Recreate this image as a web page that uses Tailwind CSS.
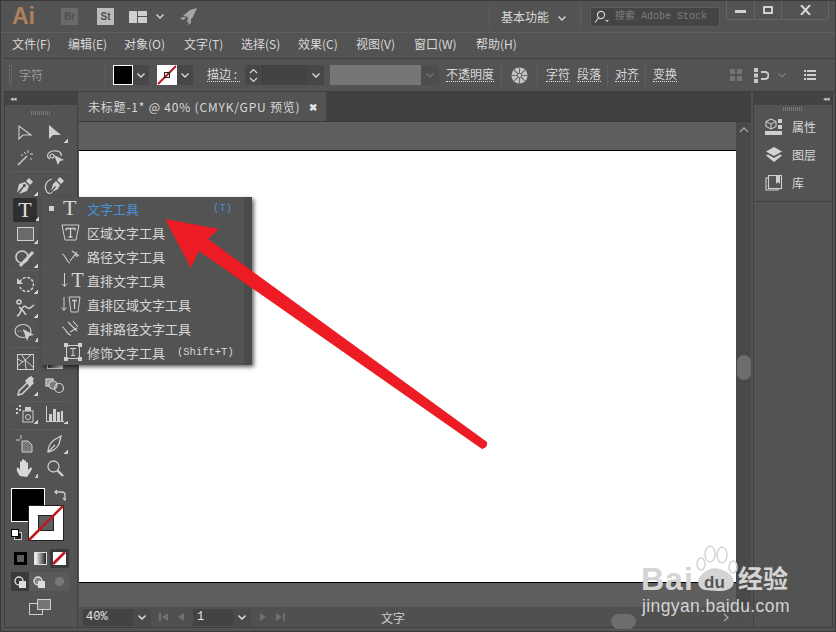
<!DOCTYPE html>
<html lang="en">
<head>
<meta charset="UTF-8">
<title>Adobe Illustrator</title>
<script src="https://cdn.jsdelivr.net/npm/@tailwindcss/browser@4"></script>
</head>
<body class="bg-[#535353]">
<div class="relative w-[836px] h-[632px] overflow-hidden flex flex-col bg-[#535353] border border-[#3a3a3a] text-[#d8d8d8] font-['Noto_Sans_CJK_SC','Liberation_Sans',sans-serif]">

  <!-- title bar -->
  <div class="h-[32px] shrink-0 flex items-center border-b border-[#5f5f5f] relative">
    <span class="ml-[11px] w-[24px] text-[23px] leading-none font-bold text-[#b07f5c] font-['Liberation_Sans',sans-serif]">Ai</span>
    <span class="ml-[25px] w-[17px] h-[17px] bg-[#6a6a6a] text-[#4f4f4f] text-[10px] font-bold flex items-center justify-center font-['Liberation_Sans',sans-serif]">Br</span>
    <span class="ml-[19px] w-[17px] h-[17px] bg-[#bcbcbc] text-[#4f4f4f] text-[10px] font-bold flex items-center justify-center font-['Liberation_Sans',sans-serif]">St</span>
    <svg class="ml-[15px]" width="18" height="12" viewBox="0 0 18 12" fill="#cfcfcf"><rect width="8" height="12"/><rect x="9" width="9" height="5"/><rect x="9" y="6" width="9" height="6"/></svg>
    <svg class="ml-[9px]" width="8" height="5" viewBox="0 0 8 5" fill="none" stroke="#d8d8d8" stroke-width="1.4"><path d="M.5.5 4 4 7.5.5"/></svg>
    <svg class="ml-[15px]" width="19" height="18" viewBox="0 0 19 18" fill="#a6a6a6"><path d="M18 0 11 2 4 8l5 1-1 6 6-6 4-9Z"/><path d="M1 10l4-1 2 1-3 2-3-2ZM9 17l1-4 2-2v4l-3 2Z"/></svg>
    <div class="ml-[291px] w-px h-[24px] bg-[#5f5f5f]"></div>
    <span class="ml-[11px] w-[48px] text-[12px] leading-none whitespace-nowrap">基本功能</span>
    <svg class="ml-[9px] mt-[3px]" width="8" height="5" viewBox="0 0 8 5" fill="none" stroke="#d8d8d8" stroke-width="1.4"><path d="M.5.5 4 4 7.5.5"/></svg>
    <div class="ml-[14px] w-px h-[24px] bg-[#5f5f5f]"></div>
    <div class="ml-[9px] w-[130px] h-[20px] bg-[#444444] border border-[#5c5c5c] rounded-[2px] flex items-center px-[3px]">
      <svg width="16" height="14" viewBox="0 0 16 14" fill="none" stroke="#cfcfcf" stroke-width="1.2"><circle cx="7" cy="5" r="3.6"/><path d="M4.5 8 1 12.5"/><path d="M11 10h4l-2 2Z" fill="#cfcfcf" stroke="none"/></svg>
      <span class="ml-[5px] text-[10px] leading-none text-[#7e7e7e] whitespace-nowrap font-['Liberation_Mono','Noto_Sans_CJK_SC',monospace]">搜索 Adobe Stock</span>
    </div>
    <div class="absolute left-[725px] top-[-1px] w-[103px] h-[20px] border border-[#656565] rounded-b-[3px] flex">
      <span class="w-[28px] flex items-center justify-center border-r border-[#656565]"><span class="w-[11px] h-[3px] bg-[#d0d0d0] mt-[3px]"></span></span>
      <span class="w-[27px] flex items-center justify-center border-r border-[#656565]"><span class="w-[10px] h-[8px] border-2 border-[#d0d0d0]"></span></span>
      <span class="flex-1 flex items-center justify-center"><svg width="11" height="10" viewBox="0 0 11 10" stroke="#d8d8d8" stroke-width="2"><path d="M1 0l9 10M10 0 1 10"/></svg></span>
    </div>
  </div>

  <!-- menu bar -->
  <div class="h-[25px] shrink-0 flex items-center pb-[3px] text-[12px] leading-none font-['Noto_Sans_CJK_SC',sans-serif]">
    <span class="ml-[11px] w-[56px]">文件(F)</span>
    <span class="w-[56px]">编辑(E)</span>
    <span class="w-[60px]">对象(O)</span>
    <span class="w-[57px]">文字(T)</span>
    <span class="w-[57px]">选择(S)</span>
    <span class="w-[58px]">效果(C)</span>
    <span class="w-[58px]">视图(V)</span>
    <span class="w-[62px]">窗口(W)</span>
    <span>帮助(H)</span>
  </div>

  <!-- control bar -->
  <div class="h-[34px] shrink-0 flex items-center border-y border-[#404040] bg-[#535353] ml-[3px] text-[12px] leading-none">
    <span class="ml-[5px] w-[3px] h-[20px] border-x border-dotted border-[#737373]"></span>
    <span class="ml-[7px] w-[86px] text-[#9a9a9a]">字符</span>
    <span class="w-px h-[24px] bg-[#5f5f5f]"></span>
    <span class="ml-[7px] w-[20px] h-[20px] bg-black border border-white"></span>
    <span class="w-[16px] h-[20px] bg-[#474747] flex items-center justify-center"><svg width="8" height="5" viewBox="0 0 8 5" fill="none" stroke="#d8d8d8" stroke-width="1.4"><path d="M.5.5 4 4 7.5.5"/></svg></span>
    <svg class="ml-[8px]" width="20" height="20" viewBox="0 0 20 20"><rect width="20" height="20" fill="#fff"/><path d="M1 19 19 1" stroke="#c0181f" stroke-width="2"/><rect x="7.5" y="7.5" width="5" height="5" fill="none" stroke="#222"/></svg>
    <span class="w-[16px] h-[20px] bg-[#474747] flex items-center justify-center"><svg width="8" height="5" viewBox="0 0 8 5" fill="none" stroke="#d8d8d8" stroke-width="1.4"><path d="M.5.5 4 4 7.5.5"/></svg></span>
    <span class="ml-[14px] w-[33px] border-b border-dotted border-[#d8d8d8] pb-[1px] whitespace-nowrap">描边 :</span>
    <span class="ml-[5px] w-[18px] h-[20px] bg-[#474747] border-r border-[#3c3c3c] flex items-center justify-center"><svg width="9" height="15" viewBox="0 0 9 15" fill="none" stroke="#d8d8d8" stroke-width="1.2"><path d="M1 5l3.5-3.5L8 5M1 10l3.5 3.5L8 10"/></svg></span>
    <span class="w-[44px] h-[20px] bg-[#434343]"></span>
    <span class="w-[17px] h-[20px] bg-[#474747] flex items-center justify-center"><svg width="8" height="5" viewBox="0 0 8 5" fill="none" stroke="#d8d8d8" stroke-width="1.4"><path d="M.5.5 4 4 7.5.5"/></svg></span>
    <span class="ml-[6px] w-[91px] h-[20px] bg-[#767676]"></span>
    <span class="w-[18px] h-[20px] bg-[#4d4d4d] flex items-center justify-center"><svg width="8" height="5" viewBox="0 0 8 5" fill="none" stroke="#6e6e6e" stroke-width="1.4"><path d="M.5.5 4 4 7.5.5"/></svg></span>
    <span class="ml-[7px] w-[48px] border-b border-dotted border-[#d8d8d8] pb-[1px] whitespace-nowrap">不透明度</span>
    <span class="ml-[7px] w-px h-[24px] bg-[#5f5f5f]"></span>
    <svg class="ml-[9px]" width="17" height="17" viewBox="0 0 17 17"><circle cx="8.5" cy="8.5" r="8" fill="#c4c4c4"/><g stroke="#666" stroke-width="1.1"><path d="M8.5 1v15M1 8.5h15M3.2 3.2l10.6 10.6M13.8 3.2 3.2 13.8"/></g><circle cx="8.5" cy="8.5" r="2.2" fill="#c4c4c4" stroke="#666"/></svg>
    <span class="ml-[9px] w-px h-[24px] bg-[#5f5f5f]"></span>
    <span class="ml-[8px] w-[24px] border-b border-dotted border-[#d8d8d8] pb-[1px] whitespace-nowrap">字符</span>
    <span class="ml-[7px] w-[24px] border-b border-dotted border-[#d8d8d8] pb-[1px] whitespace-nowrap">段落</span>
    <span class="ml-[6px] w-px h-[24px] bg-[#5f5f5f]"></span>
    <span class="ml-[7px] w-[24px] border-b border-dotted border-[#d8d8d8] pb-[1px] whitespace-nowrap">对齐</span>
    <span class="ml-[6px] w-px h-[24px] bg-[#5f5f5f]"></span>
    <span class="ml-[7px] w-[24px] border-b border-dotted border-[#d8d8d8] pb-[1px] whitespace-nowrap">变换</span>
    <svg class="ml-[53px]" width="12" height="12" viewBox="0 0 12 12" fill="#747474"><rect width="5" height="5"/><rect x="7" width="5" height="5"/><rect y="7" width="5" height="5"/><rect x="7" y="7" width="5" height="5"/></svg>
    <svg class="ml-[12px]" width="15" height="15" viewBox="0 0 15 15"><path d="M0 0h4v4H0zM0 11h4v4H0z" fill="#c9c9c9"/><path d="M0 5.500h4v4H0z" fill="#c9c9c9"/><path d="M7 4h4a3.500 3.500 0 0 1 0 7H7" fill="none" stroke="#c9c9c9" stroke-width="2"/></svg>
    <svg class="ml-[9px]" width="8" height="5" viewBox="0 0 8 5" fill="none" stroke="#7c7c7c" stroke-width="1.2"><path d="M.5.5 4 4 7.500.5"/></svg>
    <svg class="ml-[18px]" width="12" height="10" viewBox="0 0 12 10" fill="#cfcfcf"><path d="M0 0h2v2H0zM3 0h9v2H3zM0 4h2v2H0zM3 4h9v2H3zM0 8h2v2H0zM3 8h9v2H3z"/></svg>
  </div>

  <!-- work area -->
  <div class="flex-1 flex min-h-0 ml-[3px] mr-[2px] mb-[3px] border-b border-[#3f3f3f]">

    <!-- tools panel -->
    <div class="w-[74px] shrink-0 flex flex-col border-x border-[#404040] mr-px">
      <div class="h-[13px] bg-[#434343] flex items-center pl-[5px] text-[7px] leading-none text-[#c8c8c8] tracking-[-1px]">◂◂</div>
      <div class="h-[15px] flex items-center justify-center"><span class="w-[20px] h-[4px] bg-[repeating-linear-gradient(90deg,#777_0,#777_1px,transparent_1px,transparent_2px)]"></span></div>
      <div class="flex flex-col items-start pl-[5px]">
        <div class="grid grid-cols-2 auto-rows-[25px] w-[60px] h-[52px] border-b border-[#5d5d5d] place-items-center">
          <svg width="16" height="17" viewBox="0 0 16 17" fill="none" stroke="#cfcfcf" stroke-width="1.1"><path d="M2 2v13l4-4 8 0Z"/></svg>
          <div class="relative w-full h-full flex items-center justify-center">
            <svg width="16" height="17" viewBox="0 0 16 17" fill="#cfcfcf"><path d="M2 1v14l4-4h8Z"/></svg>
            <i class="absolute right-[2px] bottom-[2px] w-[4px] h-[4px] bg-[linear-gradient(135deg,transparent_50%,#cfcfcf_50%)]"></i>
          </div>
          <svg width="18" height="18" viewBox="0 0 18 18" stroke="#cfcfcf" fill="none" stroke-width="1.5"><path d="M2 16 11 7"/><path d="M12 1v3M14 5h3M8 3l2 2M15 9v2M5 6h2" stroke-width="1"/></svg>
          <svg width="20" height="18" viewBox="0 0 20 18" fill="none" stroke="#cfcfcf" stroke-width="1.2"><path d="M5 10C1 8 2 3 8 2c6-1 9 2 8 5"/><circle cx="7" cy="7" r="2"/><path d="M9 6l10 5-4 1-2 4Z" fill="#cfcfcf" stroke="none"/></svg>
        </div>
        <div class="grid grid-cols-2 auto-rows-[24px] w-[60px] h-[99px] border-b border-[#5d5d5d] place-items-center pt-[2px]">
          <div class="relative w-full h-full flex items-center justify-center">
            <svg width="18" height="18" viewBox="0 0 18 18" fill="#cfcfcf"><path d="M13 1l4 4-3 3-4-4ZM9 5l4 4-2 5-8 3 5-7a1.500 1.500 0 1 0-1-1L1 16l2-9Z"/></svg>
            <i class="absolute right-[2px] bottom-[2px] w-[4px] h-[4px] bg-[linear-gradient(135deg,transparent_50%,#cfcfcf_50%)]"></i>
          </div>
          <svg width="22" height="20" viewBox="0 0 22 20"><path d="M16 1l4 4-3 3-4-4ZM12 5l4 4-2 4-6 3 4-5-1-1-4 5 2-7Z" fill="#cfcfcf"/><path d="M8 3C1 5 0 12 3 16c2 2 4 2 5 0" fill="none" stroke="#cfcfcf" stroke-width="1.2"/></svg>
          <span class="relative w-[24px] h-[24px] bg-[#2f2f2f] rounded-[2px] flex items-center justify-center text-[22px] leading-none text-[#e0e0e0] font-['Liberation_Serif',serif]">T<i class="absolute right-[-2px] bottom-[1px] w-[4px] h-[4px] bg-[linear-gradient(135deg,transparent_50%,#cfcfcf_50%)]"></i></span>
          <span></span>
          <div class="relative w-full h-full flex items-center justify-center">
            <span class="w-[17px] h-[14px] bg-[#6a6a6a] border border-[#cfcfcf]"></span>
            <i class="absolute right-[2px] bottom-[2px] w-[4px] h-[4px] bg-[linear-gradient(135deg,transparent_50%,#cfcfcf_50%)]"></i>
          </div>
          <span></span>
          <div class="relative w-full h-full flex items-center justify-center">
            <svg width="22" height="20" viewBox="0 0 22 20" fill="none" stroke="#cfcfcf" stroke-width="1.6"><circle cx="8" cy="9" r="6"/><path d="M6 18 19 4" stroke-width="3"/></svg>
            <i class="absolute right-[2px] bottom-[2px] w-[4px] h-[4px] bg-[linear-gradient(135deg,transparent_50%,#cfcfcf_50%)]"></i>
          </div>
          <span></span>
        </div>
        <div class="grid grid-cols-2 auto-rows-[24px] w-[60px] h-[77px] border-b border-[#5d5d5d] place-items-center pt-[1px]">
          <div class="relative w-full h-full flex items-center justify-center">
            <svg width="18" height="18" viewBox="0 0 18 18" fill="none" stroke="#cfcfcf" stroke-width="1.6"><path d="M4 7a7 7 0 1 1 0 5" stroke-dasharray="3 1.500"/><path d="M1 3v6h6Z" fill="#cfcfcf" stroke="none"/></svg>
            <i class="absolute right-[2px] bottom-[2px] w-[4px] h-[4px] bg-[linear-gradient(135deg,transparent_50%,#cfcfcf_50%)]"></i>
          </div>
          <span></span>
          <div class="relative w-full h-full flex items-center justify-center">
            <svg width="20" height="18" viewBox="0 0 20 18" fill="none" stroke="#cfcfcf" stroke-width="1.600"><circle cx="4" cy="3" r="2"/><path d="M2 17c4-1 3-6 6-9s4 3 7 1 3-2 4-3M4 8c2 2 5 4 7 8"/></svg>
            <i class="absolute right-[2px] bottom-[2px] w-[4px] h-[4px] bg-[linear-gradient(135deg,transparent_50%,#cfcfcf_50%)]"></i>
          </div>
          <span></span>
          <div class="relative w-full h-full flex items-center justify-center">
            <svg width="22" height="19" viewBox="0 0 22 19"><ellipse cx="9" cy="8" rx="8" ry="6.500" fill="none" stroke="#cfcfcf" stroke-width="1.200"/><path d="M9 6l11 6-5 1-2 5Z" fill="#cfcfcf"/><path d="M4 8h6" stroke="#cfcfcf" stroke-dasharray="1 1.500"/></svg>
            <i class="absolute right-[2px] bottom-[2px] w-[4px] h-[4px] bg-[linear-gradient(135deg,transparent_50%,#cfcfcf_50%)]"></i>
          </div>
          <span></span>
        </div>
        <div class="grid grid-cols-2 auto-rows-[24px] w-[60px] h-[54px] border-b border-[#5d5d5d] place-items-center pt-[2px]">
          <svg width="17" height="16" viewBox="0 0 17 16" fill="none" stroke="#cfcfcf"><rect x=".5" y=".5" width="16" height="15"/><path d="M.5 12 8 6l8 7M5 1l3 5 1 9M14 1 8 6M1 5l5 3"/></svg>
          <span class="w-[16px] h-[14px] bg-[linear-gradient(90deg,#3b3b3b,#dddddd)] border border-[#cfcfcf]"></span>
          <div class="relative w-full h-full flex items-center justify-center">
            <svg width="18" height="20" viewBox="0 0 18 20" fill="none" stroke="#cfcfcf" stroke-width="1.500"><path d="M11 7 3 15l-1 4 4-1 8-8"/><path d="M10 5l4 5 3-3-1-2 1-2-2-2-2 1-1 1Z" fill="#cfcfcf"/></svg>
            <i class="absolute right-[2px] bottom-[2px] w-[4px] h-[4px] bg-[linear-gradient(135deg,transparent_50%,#cfcfcf_50%)]"></i>
          </div>
          <svg width="20" height="16" viewBox="0 0 20 16" fill="none" stroke="#cfcfcf" stroke-width="1.200"><rect x="1" y="1" width="7" height="7" fill="#9a9a9a"/><circle cx="8" cy="7" r="4" fill="#7a7a7a"/><circle cx="14" cy="10" r="4.500"/></svg>
        </div>
        <div class="grid grid-cols-2 auto-rows-[24px] w-[60px] h-[28px] border-b border-[#5d5d5d] place-items-center">
          <div class="relative w-full h-full flex items-center justify-center">
            <svg width="18" height="18" viewBox="0 0 18 18"><path d="M0 3h2v2H0zM3 0h2v2H3zM3 4h2v2H3zM0 7h2v2H0z" fill="#cfcfcf"/><rect x="7" y="6" width="10" height="11" fill="none" stroke="#cfcfcf"/><rect x="9" y="2" width="6" height="4" fill="#cfcfcf"/><circle cx="12" cy="12" r="2.500" fill="none" stroke="#cfcfcf"/></svg>
            <i class="absolute right-[2px] bottom-[2px] w-[4px] h-[4px] bg-[linear-gradient(135deg,transparent_50%,#cfcfcf_50%)]"></i>
          </div>
          <div class="relative w-full h-full flex items-center justify-center">
            <svg width="18" height="16" viewBox="0 0 18 16" fill="#cfcfcf"><path d="M0 0h1v15h17v1H0z"/><path d="M3 8h3v7H3zM7 3h3v12H7zM11 6h3v9h-3zM15 5h2v10h-2z"/></svg>
            <i class="absolute right-[2px] bottom-[2px] w-[4px] h-[4px] bg-[linear-gradient(135deg,transparent_50%,#cfcfcf_50%)]"></i>
          </div>
        </div>
        <div class="grid grid-cols-2 auto-rows-[24px] w-[60px] h-[52px] place-items-center pt-[2px]">
          <svg width="18" height="18" viewBox="0 0 18 18"><path d="M6 6h6l4 4v7H6z" fill="#777" stroke="#cfcfcf"/><path d="M5 0v4M0 5h4" stroke="#cfcfcf"/></svg>
          <div class="relative w-full h-full flex items-center justify-center">
            <svg width="18" height="20" viewBox="0 0 18 20" fill="none" stroke="#cfcfcf" stroke-width="1.300"><path d="M2 18c0-5 2-9 6-12l7-4-2 8c-2 4-6 7-11 8Z"/><path d="M2 18 9 11"/></svg>
            <i class="absolute right-[2px] bottom-[2px] w-[4px] h-[4px] bg-[linear-gradient(135deg,transparent_50%,#cfcfcf_50%)]"></i>
          </div>
          <div class="relative w-full h-full flex items-center justify-center">
            <svg width="18" height="18" viewBox="0 0 18 18" fill="#d8d8d8"><path d="M4 17C2 14 0 11 1 9c1-1 2 0 3 2V3c0-1 2-1 2 0v5-7c0-1 2-1 2 0v7-6c0-1 2-1 2 0v7-5c0-1 2-1 2 0v7l2-2c1-1 2 0 2 1l-3 5-2 3Z"/></svg>
            <i class="absolute right-[2px] bottom-[2px] w-[4px] h-[4px] bg-[linear-gradient(135deg,transparent_50%,#cfcfcf_50%)]"></i>
          </div>
          <svg width="18" height="18" viewBox="0 0 18 18" fill="none" stroke="#cfcfcf" stroke-width="1.300"><circle cx="7.500" cy="7.500" r="5.500"/><path d="M11.500 11.500 17 17" stroke-width="2.400"/></svg>
        </div>
        <!-- fill and stroke -->
        <div class="relative w-[60px] h-[67px] shrink-0">
          <span class="absolute left-[1px] top-[6px] w-[34px] h-[34px] bg-black border border-white"></span>
          <span class="absolute left-[18px] top-[23px] w-[36px] h-[36px] bg-white border border-[#222] flex items-center justify-center"><span class="w-[16px] h-[16px] bg-[#5f5f5f] border border-[#222]"></span></span>
          <svg class="absolute left-[18px] top-[23px]" width="36" height="36" viewBox="0 0 36 36"><path d="M1 35 35 1" stroke="#c0181f" stroke-width="2.500"/></svg>
          <svg class="absolute left-[44px] top-[7px]" width="12" height="12" viewBox="0 0 12 12" fill="none" stroke="#cfcfcf" stroke-width="1.300"><path d="M1 3h7c2 0 3 1 3 3v5"/><path d="M3 1 1 3l2 2M9 9l2 2 2-2"/></svg>
          <span class="absolute left-[1px] top-[47px] w-[8px] h-[8px] bg-white border border-black z-10"></span>
          <span class="absolute left-[4px] top-[50px] w-[8px] h-[8px] bg-[#222] border border-[#cfcfcf]"></span>
        </div>
        <div class="flex w-[58px] h-[19px] ml-[1px] items-center">
          <span class="w-[19px] flex justify-center"><span class="w-[13px] h-[13px] bg-[#5f5f5f] border-[3px] border-black"></span></span>
          <span class="w-[20px] flex justify-center"><span class="w-[13px] h-[13px] bg-[linear-gradient(90deg,#fff,#222)] border border-[#ddd]"></span></span>
          <span class="w-[19px] h-[19px] bg-[#3a3a3a] rounded-[2px] flex items-center justify-center"><svg width="13" height="13" viewBox="0 0 14 14"><rect width="14" height="14" fill="#fff"/><path d="M0 13 13 0" stroke="#c0181f" stroke-width="3"/></svg></span>
        </div>
        <div class="flex w-[58px] h-[19px] mt-[4px] ml-[1px] bg-[#5a5a5a] items-center">
          <span class="w-[18px] h-[19px] bg-[#3a3a3a] flex items-center justify-center"><svg width="12" height="12" viewBox="0 0 12 12"><circle cx="5" cy="5" r="4" fill="none" stroke="#ddd" stroke-width="1.400"/><rect x="5" y="5" width="7" height="7" fill="#ddd"/></svg></span>
          <span class="w-[20px] flex justify-center"><svg width="12" height="12" viewBox="0 0 12 12"><circle cx="5" cy="5" r="4" fill="#888" stroke="#ddd" stroke-width="1.400"/><rect x="5" y="5" width="7" height="7" fill="#ddd"/></svg></span>
          <span class="w-[20px] flex justify-center"><span class="w-[9px] h-[9px] rounded-full bg-[#777]"></span></span>
        </div>
        <svg class="mt-[8px] ml-[19px]" width="22" height="16" viewBox="0 0 22 16" fill="none" stroke="#cfcfcf"><rect x=".5" y="4.500" width="13" height="11"/><rect x="8.500" y=".5" width="13" height="10" fill="#767676"/></svg>
      </div>
    </div>

    <!-- document -->
    <div class="flex-1 flex flex-col min-w-0">
      <div class="h-[30px] shrink-0 flex bg-[#414141] border-b border-[#3a3a3a]">
        <div class="w-[247px] bg-[#535353] flex items-center pl-[9px] pr-[8px] justify-between text-[12px] tracking-[0.8px] leading-none whitespace-nowrap">
          <span>未标题-1* @ 40% (CMYK/GPU 预览)</span>
          <span class="text-[10px] font-bold text-[#e4e4e4]">✖</span>
        </div>
      </div>
      <div class="flex-1 flex min-h-0">
        <div class="flex-1 flex flex-col bg-[#5e5e5e]">
          <div class="h-[28px] shrink-0"></div>
          <div class="h-[433px] shrink-0 bg-white border-y border-black"></div>
        </div>
        <div class="w-[15px] shrink-0 bg-[#494949] flex flex-col items-center pt-[5px] relative">
          <svg width="10" height="6" viewBox="0 0 10 6" fill="none" stroke="#9c9c9c" stroke-width="1.500"><path d="M1 5l4-4 4 4"/></svg>
          <span class="absolute left-[1px] top-[233px] w-[14px] h-[25px] rounded-full bg-[#6d6d6d]"></span>
        </div>
      </div>
      <!-- status bar -->
      <div class="h-[20px] shrink-0 flex items-center bg-[#505050] text-[12px] leading-none pr-[15px]">
        <span class="ml-[4px] w-[50px] h-[17px] bg-[#434343] flex items-center pl-[3px] text-[#e4e4e4] font-['Liberation_Mono',monospace]">40%</span>
        <span class="w-[18px] h-[17px] bg-[#4a4a4a] flex items-center justify-center"><svg width="8" height="5" viewBox="0 0 8 5" fill="none" stroke="#e4e4e4" stroke-width="1.400"><path d="M.5.5 4 4 7.500.5"/></svg></span>
        <svg class="ml-[8px]" width="25" height="10" viewBox="0 0 25 10" fill="#707070"><path d="M0 1h2v8H0zM9 1v8L3 5zM25 1v8l-6-4z"/></svg>
        <span class="ml-[9px] w-[40px] h-[17px] bg-[#434343] flex items-center pl-[4px] text-[#e4e4e4] font-['Liberation_Mono',monospace]">1</span>
        <span class="w-[18px] h-[17px] bg-[#4a4a4a] flex items-center justify-center"><svg width="8" height="5" viewBox="0 0 8 5" fill="none" stroke="#e4e4e4" stroke-width="1.400"><path d="M.5.5 4 4 7.500.5"/></svg></span>
        <svg class="ml-[9px]" width="26" height="10" viewBox="0 0 26 10" fill="#707070"><path d="M0 1v8l6-4zM16 1v8l6-4zM23 1h2v8h-2z"/></svg>
        <span class="ml-[95px] text-[#cfcfcf] mt-[2px]">文字</span>
        <svg class="ml-auto mr-[7px]" width="6" height="9" viewBox="0 0 6 9" fill="none" stroke="#b0b0b0" stroke-width="1.200"><path d="M1 1l4 3.500L1 8"/></svg>
        <span class="absolute left-[610px] top-[613px] w-[25px] h-[15px] rounded-full bg-[#6d6d6d]"></span>
      </div>
    </div>

    <!-- right panel -->
    <div class="w-[80px] shrink-0 flex flex-col ml-[2px] border-x border-[#404040]">
      <div class="h-[13px] bg-[#434343] flex items-center justify-end pr-[3px] text-[7px] leading-none text-[#c8c8c8] tracking-[-1px]">◂◂</div>
      <div class="h-[8px] flex items-center justify-center"><span class="w-[20px] h-[4px] bg-[repeating-linear-gradient(90deg,#777_0,#777_1px,transparent_1px,transparent_2px)]"></span></div>
      <div class="flex flex-col border-b border-[#404040] pb-[4px] text-[12px] leading-none">
        <div class="h-[28px] flex items-center pl-[11px] gap-[9px]">
          <svg width="18" height="18" viewBox="0 0 18 18"><path d="M6 1l5 2.500v5L6 11 1 8.500v-5Z" fill="none" stroke="#cfcfcf" stroke-width="1.100"/><path d="M1 3.500 6 6l5-2.500M6 6v5" fill="none" stroke="#cfcfcf"/><rect x="13" y="1" width="4" height="4" fill="#cfcfcf"/><rect x="13" y="7" width="4" height="4" fill="#cfcfcf"/><rect y="13" width="17" height="4" fill="#cfcfcf"/></svg>
          <span>属性</span>
        </div>
        <div class="h-[28px] flex items-center pl-[11px] gap-[9px]">
          <svg width="18" height="16" viewBox="0 0 18 16" fill="#d4d4d4"><path d="M9 0l8 4.500L9 9 1 4.500Z"/><path d="M1 8.500 3 7.500 9 11l6-3.500 2 1L9 15Z"/></svg>
          <span>图层</span>
        </div>
        <div class="h-[28px] flex items-center pl-[11px] gap-[9px]">
          <svg width="18" height="16" viewBox="0 0 18 16" fill="none" stroke="#cfcfcf" stroke-width="1.100"><path d="M3 3H1v12h12v-1"/><rect x="3.500" y=".5" width="13" height="13"/><path d="M11 1h4v8l-2-2-2 2Z" fill="#cfcfcf" stroke="none"/></svg>
          <span>库</span>
        </div>
      </div>
    </div>
  </div>

  <!-- type tool flyout -->
  <div class="absolute left-[40px] top-[196px] w-[211px] h-[168px] bg-[#535353] shadow-[2px_2px_4px_rgba(0,0,0,0.6)] flex text-[13px] leading-none text-[#d8d8d8] font-['Noto_Sans_CJK_SC',sans-serif]">
    <div class="w-[202px] flex flex-col -mt-[1px]">
      <div class="h-[24px] flex items-center relative"><span class="absolute left-[8px] w-[5px] h-[5px] bg-[#cfcfcf]"></span><span class="w-[46px] pl-[22px] text-[22px] font-['Liberation_Serif',serif] text-[#d8d8d8]">T</span><span class="text-[#4a90d9]">文字工具</span><span class="ml-auto mr-[11px] text-[#4a90d9] text-[10.500px] font-['Liberation_Mono',monospace]">(T)</span></div>
      <div class="h-[24px] flex items-center"><svg class="ml-[20px] mr-[7px]" width="19" height="17" viewBox="0 0 19 17" fill="none" stroke="#cfcfcf"><path d="M1 1h17l-3 15H4Z"/><path d="M5 4.500h9v2M9.500 4.500V13M7.500 13h4M5 6.500v-2" stroke-width="1.300"/></svg>区域文字工具</div>
      <div class="h-[24px] flex items-center"><svg class="ml-[20px] mr-[7px]" width="19" height="17" viewBox="0 0 19 17" fill="none" stroke="#cfcfcf" stroke-width="1.100"><path d="M1 6c3 0 5 9 8 9"/><path d="M9 13 16 4M11 3l7 5M14 6l2 3"/></svg>路径文字工具</div>
      <div class="h-[24px] flex items-center"><svg class="ml-[20px]" width="7" height="15" viewBox="0 0 7 15" fill="none" stroke="#cfcfcf"><path d="M3.500 0v13M1 10.500l2.500 3 2.500-3"/></svg><span class="w-[19px] text-[20px] font-['Liberation_Serif',serif] text-center">T</span>直排文字工具</div>
      <div class="h-[24px] flex items-center"><svg class="ml-[20px] mr-[1px]" width="6" height="15" viewBox="0 0 6 15" fill="none" stroke="#cfcfcf"><path d="M3 0v13M.5 10.500l2.500 3 2.500-3"/></svg><svg class="mr-[6px]" width="13" height="17" viewBox="0 0 13 17" fill="none" stroke="#cfcfcf"><path d="M1 1h11l-2 15H3Z"/><path d="M4 4.500h5M6.500 4.500V13" stroke-width="1.300"/></svg>直排区域文字工具</div>
      <div class="h-[24px] flex items-center"><svg class="ml-[20px] mr-[7px]" width="19" height="17" viewBox="0 0 19 17" fill="none" stroke="#cfcfcf" stroke-width="1.100"><path d="M1 7c3 0 5 8 9 8"/><path d="M7 2l9 9M12 1l5 6M9 12l7-4"/></svg>直排路径文字工具</div>
      <div class="h-[24px] flex items-center whitespace-nowrap"><svg class="ml-[23px] mr-[5px]" width="18" height="18" viewBox="0 0 18 18" fill="none" stroke="#cfcfcf"><rect x="2.500" y="2.500" width="13" height="13"/><path d="M6 5.500h6M9 5.500v7M7 12.500h4"/><g fill="#cfcfcf" stroke="none"><rect width="4" height="4"/><rect x="14" width="4" height="4"/><rect y="14" width="4" height="4"/><rect x="14" y="14" width="4" height="4"/></g></svg>修饰文字工具<span class="ml-[12px] text-[10.500px] font-['Liberation_Mono',monospace]">(Shift+T)</span></div>
    </div>
    <div class="ml-auto w-[8px] bg-[#4a4a4a]"></div>
  </div>

  <!-- red arrow annotation -->
  <svg class="absolute left-[0px] top-[0px] pointer-events-none" width="836" height="632" viewBox="0 0 836 632"><path d="M164 218 218 228 207 238 486 441Q487 447 481 448L198 250 190 267Z" fill="#ed1c24"/></svg>

  <!-- watermark -->
  <div class="absolute left-[640px] top-[542px] w-[192px] h-[72px] text-[#d4d4d4] pointer-events-none font-['Liberation_Sans',sans-serif]">
    <span class="absolute left-[0px] top-[20px] text-[32px] leading-none font-bold tracking-[1px]">Bai</span>
    <svg class="absolute left-[54px] top-[0px]" width="44" height="50" viewBox="0 0 44 50" fill="none" stroke="currentColor" stroke-width="1.500"><ellipse cx="15" cy="11" rx="5" ry="8"/><ellipse cx="27" cy="12" rx="5" ry="8"/><ellipse cx="6" cy="21" rx="4" ry="6"/><ellipse cx="38" cy="24" rx="4" ry="6"/><path d="M4 40c-1-8 10-14 16-14s19 6 18 14c-1 6-9 8-17 7s-16 1-17-7Z" fill="currentColor"/></svg>
    <span class="absolute left-[63px] top-[31px] text-[17px] leading-none font-bold text-[#555555]">du</span>
    <span class="absolute left-[97px] top-[22px] text-[25px] leading-none font-bold font-['Noto_Sans_CJK_SC',sans-serif]">经验</span>
    <span class="absolute left-[1px] top-[55px] text-[17.500px] leading-none tracking-[0.400px]">jingyan.baidu.com</span>
  </div>
</div>
</body>
</html>
